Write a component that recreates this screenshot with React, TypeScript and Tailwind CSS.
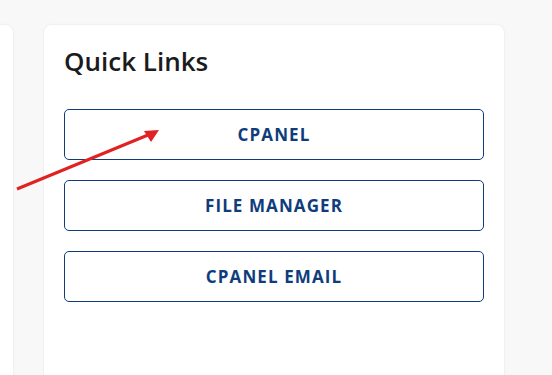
export default function App() {
  const links = ['CPANEL', 'FILE MANAGER', 'CPANEL EMAIL'];

  return (
    <div
      className="relative h-[375px] w-[552px] overflow-hidden bg-[#f8f8f8]"
      style={{ fontFamily: '"Open Sans", sans-serif' }}
    >
      <div className="flex gap-[31px] pt-[25px]">
        {/* left card, mostly off screen */}
        <div className="ml-[-200px] h-[400px] w-[213px] shrink-0 rounded-lg bg-white shadow-[0_0_3px_rgba(0,0,0,0.08)]" />

        {/* Quick Links card */}
        <div className="h-[400px] w-[460px] shrink-0 rounded-lg bg-white px-5 pt-[19px] shadow-[0_0_3px_rgba(0,0,0,0.08)]">
          <h2 className="text-[26px] font-semibold leading-[34px] text-[#1b1b1b]">Quick Links</h2>
          <div className="mt-[31px] flex flex-col gap-5">
            {links.map((l) => (
              <a
                key={l}
                href="#"
                className="flex h-[51px] items-center justify-center rounded-[5px] border border-[#0f3d7c] text-[17px] font-bold tracking-[1.1px] text-[#0f3d7c]"
              >
                {l}
              </a>
            ))}
          </div>
        </div>
      </div>

      {/* annotation arrow */}
      <svg className="absolute left-0 top-0" width="552" height="375">
        <line x1="17" y1="189" x2="148" y2="135" stroke="#e12222" strokeWidth="3" />
        <polygon points="159,130 144,131 151,142" fill="#e12222" />
      </svg>
    </div>
  );
}
